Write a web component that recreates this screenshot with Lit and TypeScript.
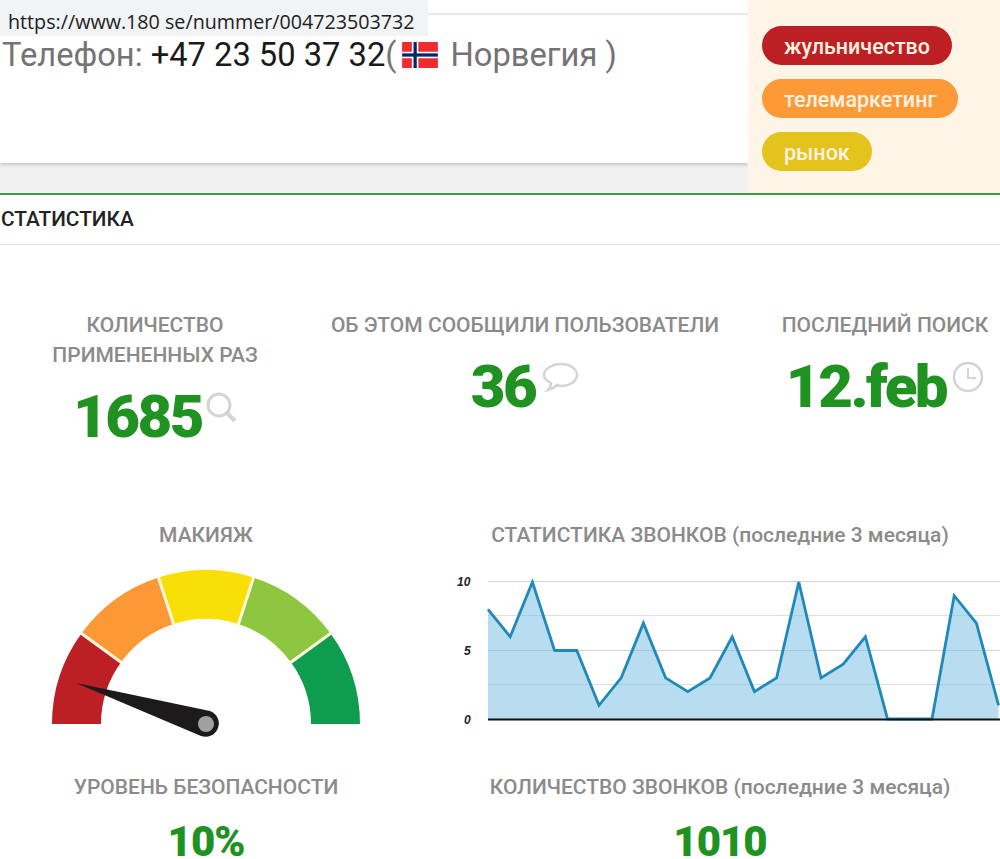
import { LitElement, html, css, svg } from "lit";
import { customElement } from "lit/decorators.js";

const DATA = [8, 6, 10, 5, 5, 1, 3, 7, 3, 2, 3, 6, 2, 3, 10, 3, 4, 6, 0, 0, 0, 9, 7, 1];
const X0 = 48;
const DX = 22.2;
const Y0 = 158;
const UNIT = 13.7;

function polar(r: number, deg: number) {
  const a = (deg * Math.PI) / 180;
  return `${(156 - r * Math.cos(a)).toFixed(1)} ${(159 - r * Math.sin(a)).toFixed(1)}`;
}
function seg(a: number, b: number) {
  const R = 154, r = 105;
  return `M${polar(R, a)}A${R} ${R} 0 0 1 ${polar(R, b)}L${polar(r, b)}A${r} ${r} 0 0 0 ${polar(r, a)}Z`;
}

@customElement("app-root")
export class AppRoot extends LitElement {
  static styles = css`
    :host { display: block; width: 1000px; height: 859px; overflow: hidden; background: #fff; font-family: Roboto, "Noto Sans", sans-serif; position: relative; }
    .tip { position: absolute; left: 0; top: 0; width: 420px; height: 36px; padding-left: 8px; background: #f1f3f4; color: #202124; font: 19.7px/44px "Open Sans", "Noto Sans", sans-serif; white-space: nowrap; overflow: hidden; }
    .top { display: flex; height: 193px; background: #f1f1f1; }
    .left { flex: 1; height: 163px; box-sizing: border-box; background: #fff; box-shadow: 0 1px 4px rgba(0,0,0,.25); padding-top: 13px; }
    .rule { border-top: 2px solid #e8e8e8; }
    .phone { margin: 20px 0 0 2px; font-size: 32.7px; font-weight: 400; line-height: 40px; color: #747474; display: flex; align-items: center; white-space: nowrap; }
    .phone b { font-weight: 400; color: #1a1a1a; margin-left: 8px; }
    .flag { margin: 0 13px 0 5px; flex: none; }
    .side { width: 252px; box-sizing: border-box; background: #fef5e7; padding: 26px 0 0 14px; display: flex; flex-direction: column; align-items: flex-start; gap: 14px; }
    .tag { height: 39px; border-radius: 20px; padding: 0 22px; color: #fdf1e0; font-size: 21.5px; font-weight: 500; line-height: 41px; }
    .red { background: #bc2025; } .orange { background: #fd9a38; } .yellow { background: #e3c31c; }
    .green-line { height: 2px; background: #3f9a46; }
    h2 { margin: 0; height: 50px; box-sizing: border-box; border-bottom: 1px solid #e2e2e2; font-size: 20.8px; font-weight: 500; line-height: 48px; color: #222; padding-left: 1px; }
    .stats { display: grid; grid-template-columns: 310px 430px 30px 230px; padding-top: 65px; height: 210px; }
    .stats .c3 { grid-column: 4; }
    .label { color: #8b8b8b; font-size: 21px; font-weight: 500; line-height: 30px; text-align: center; white-space: nowrap; }
    .value { display: flex; justify-content: center; align-items: flex-start; color: #1f9222; font-family: Roboto, sans-serif; font-weight: 900; font-size: 60px; line-height: 64px; letter-spacing: -2.5px; margin-top: 15px; }
    .value svg { margin: 6px 0 0 6px; flex: none; }
    .value svg.search { margin-left: 3px; }
    .row { display: grid; grid-template-columns: 412px 588px; }
    .r2 { height: 252px; }
    .chart-cell { padding-left: 28px; }
    .gauge { display: block; margin: 15px 0 0 50px; }
    .chart { display: block; margin: 11px 0 0; }
    .bottom .value { font-size: 42px; line-height: 56px; margin-top: 12px; letter-spacing: -1px; }
    .ax { font: italic bold 12px "Liberation Sans", sans-serif; fill: #222; }
  `;

  render() {
    const pts = DATA.map((v, i) => `${(X0 + i * DX).toFixed(1)},${(Y0 - v * UNIT).toFixed(1)}`).join(" ");
    const x = X0 + (DATA.length - 1) * DX;
    return html`
      <div class="tip">https://www.180 se/nummer/004723503732</div>
      <div class="top">
        <div class="left">
          <div class="rule"></div>
          <div class="phone">Телефон:<b>+47 23 50 37 32</b>(<svg class="flag" width="36" height="26" viewBox="0 0 22 16"><rect width="22" height="16" fill="#ef2b2d"/><rect x="6" width="4" height="16" fill="#fff"/><rect y="6" width="22" height="4" fill="#fff"/><rect x="7" width="2" height="16" fill="#002868"/><rect y="7" width="22" height="2" fill="#002868"/></svg>Норвегия )</div>
        </div>
        <div class="side">
          <div class="tag red">жульничество</div>
          <div class="tag orange">телемаркетинг</div>
          <div class="tag yellow">рынок</div>
        </div>
      </div>
      <div class="green-line"></div>
      <h2>СТАТИСТИКА</h2>
      <div class="stats">
        <div>
          <div class="label">КОЛИЧЕСТВО<br />ПРИМЕНЕННЫХ РАЗ</div>
          <div class="value">1685<svg class="search" width="32" height="34" viewBox="0 0 32 34" fill="none" stroke="#d4d4d4" stroke-width="3"><circle cx="14" cy="14" r="11"/><path d="M22 22l8 8" stroke-width="4"/></svg></div>
        </div>
        <div>
          <div class="label">ОБ ЭТОМ СООБЩИЛИ ПОЛЬЗОВАТЕЛИ</div>
          <div class="value">36<svg width="38" height="34" viewBox="0 0 38 34" fill="none" stroke="#d4d4d4" stroke-width="2.5"><path d="M20 3c9 0 16 5 16 11s-7 11-16 11c-2 0-3 0-4-1-2 2-5 4-9 5 2-2 3-5 3-7-4-2-7-5-7-8C3 8 11 3 20 3z"/></svg></div>
        </div>
        <div class="c3">
          <div class="label">ПОСЛЕДНИЙ ПОИСК</div>
          <div class="value">12.feb<svg width="32" height="32" viewBox="0 0 32 32" fill="none" stroke="#d4d4d4" stroke-width="2.5"><circle cx="16" cy="16" r="14"/><path d="M16 7v10h8" stroke-width="2"/></svg></div>
        </div>
      </div>
      <div class="row r2">
        <div>
          <div class="label">МАКИЯЖ</div>
          <svg class="gauge" width="320" height="180" viewBox="0 0 320 180">
            <path d=${seg(0, 36)} fill="#bc2025" />
            <path d=${seg(36, 72)} fill="#fb9937" />
            <path d=${seg(72, 108)} fill="#f8df08" />
            <path d=${seg(108, 144)} fill="#8dc63f" />
            <path d=${seg(144, 180)} fill="#0e9c4e" />
            <g fill="none" stroke="#fff8e0" stroke-width="3">
              ${[36, 72, 108, 144].map((d) => svg`<path d="M${polar(103, d)}L${polar(156, d)}" />`)}
            </g>
            <path d="M26 118 L160 146 A13 13 0 1 1 151 171 Z" fill="#1c1a1b" />
            <circle cx="156" cy="159" r="8" fill="#a0a0a0" />
          </svg>
        </div>
        <div class="chart-cell">
          <div class="label">СТАТИСТИКА ЗВОНКОВ (последние 3 месяца)</div>
          <svg class="chart" width="560" height="170" viewBox="0 0 560 170">
            <g stroke="#cfcfcf"><path d="M48 89.5H560"/><path d="M48 123.5H560" stroke="#e0e0e0"/><path d="M48 20.5H560" /><path d="M48 54.5H560" stroke="#e0e0e0"/></g>
            <polygon points="${X0},${Y0} ${pts} ${x},${Y0}" fill="#80c1e4" fill-opacity=".55" />
            <polyline points=${pts} fill="none" stroke="#2089b8" stroke-width="2.8" stroke-linejoin="miter" />
            <path d="M48 158.5H560" stroke="#111" stroke-width="2" />
            <text class="ax" x="17" y="25">10</text>
            <text class="ax" x="24" y="94">5</text>
            <text class="ax" x="24" y="163">0</text>
          </svg>
        </div>
      </div>
      <div class="row bottom">
        <div>
          <div class="label">УРОВЕНЬ БЕЗОПАСНОСТИ</div>
          <div class="value">10%</div>
        </div>
        <div class="chart-cell">
          <div class="label">КОЛИЧЕСТВО ЗВОНКОВ (последние 3 месяца)</div>
          <div class="value">1010</div>
        </div>
      </div>
    `;
  }
}
